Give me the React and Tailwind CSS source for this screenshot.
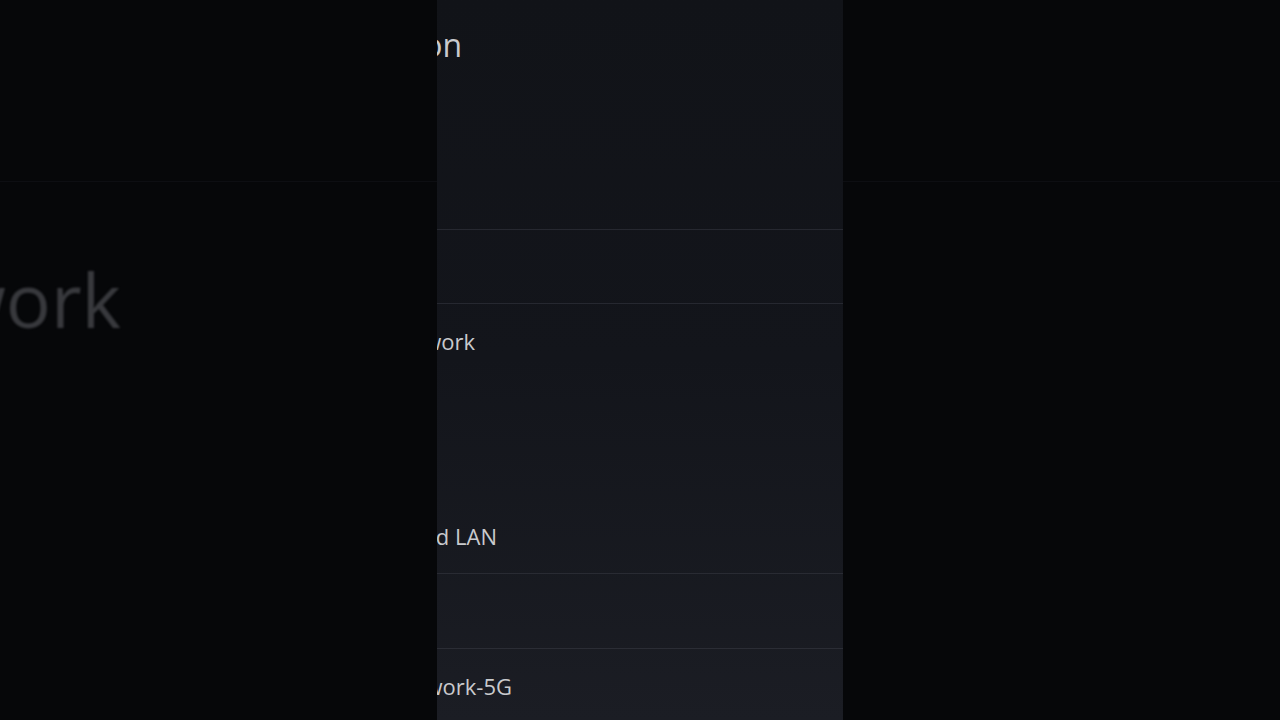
import React from "react";

const font = { fontFamily: '"Open Sans", "Noto Sans", sans-serif' };

function Clipped({ w, children, className = "" }) {
  return (
    <div className={`flex justify-end whitespace-nowrap ${w} ${className}`}>
      <span>{children}</span>
    </div>
  );
}

export default function App() {
  return (
    <div className="flex h-[720px] w-[1280px] overflow-hidden bg-[#060709]" style={font}>
      {/* left blurred backdrop */}
      <div className="flex w-[437px] shrink-0 flex-col overflow-hidden">
        <div className="h-[182px] shrink-0 border-b border-[#0d0e12]" />
        <Clipped
          w="w-[121px]"
          className="mt-[77px] text-[75px] leading-[80px] text-[#38393d] blur-[1px]"
        >
          Network
        </Clipped>
      </div>

      {/* center panel */}
      <div className="flex w-[406px] shrink-0 flex-col overflow-hidden bg-gradient-to-b from-[#111318] via-[#13151b] to-[#1b1d24] text-[#c9cacd]">
        <div className="h-[229px] shrink-0 pt-[25px]">
          <Clipped w="w-[25px]" className="text-[32px] leading-[40px]">
            Set Up Internet Connection
          </Clipped>
        </div>
        <div className="h-[74px] shrink-0 border-t border-[#262830]" />
        <div className="flex h-[270px] shrink-0 flex-col justify-between border-t border-[#262830] pb-[22px] pt-[22px] text-[22px] leading-[30px]">
          <Clipped w="w-[38px]">Network</Clipped>
          <Clipped w="w-[60px]">Use Wired LAN</Clipped>
        </div>
        <div className="h-[75px] shrink-0 border-t border-[#292b33]" />
        <div className="flex-1 border-t border-[#2b2d35] pt-[22px] text-[22px] leading-[30px]">
          <Clipped w="w-[75px]">Network-5G</Clipped>
        </div>
      </div>

      {/* right blurred backdrop */}
      <div className="flex flex-1 flex-col">
        <div className="h-[182px] shrink-0 border-b border-[#0d0e12]" />
      </div>
    </div>
  );
}
